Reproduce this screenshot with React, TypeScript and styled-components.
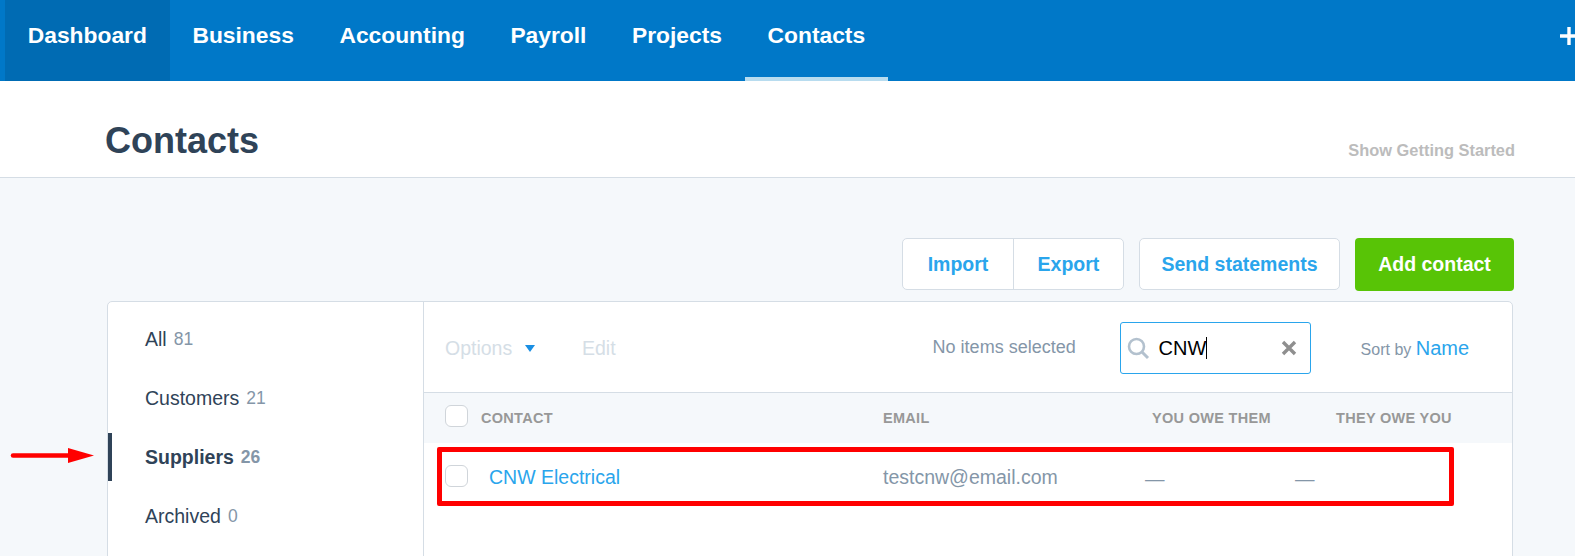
import React from 'react';
import styled, { createGlobalStyle } from 'styled-components';

const GlobalStyle = createGlobalStyle`
  html, body {
    margin: 0;
    padding: 0;
    background: #f5f8fb;
    overflow: hidden;
  }
  * {
    box-sizing: border-box;
  }
`;

const Page = styled.div`
  position: relative;
  width: 1575px;
  height: 556px;
  overflow: hidden;
  font-family: 'Liberation Sans', Arial, sans-serif;
  background: #f5f8fb;
`;

const Nav = styled.nav`
  display: flex;
  height: 81px;
  padding-left: 5px;
  background: #0078c8;
`;

const NavItem = styled.div<{ $home?: boolean; $current?: boolean }>`
  display: flex;
  align-items: flex-start;
  padding: 20px 22.8px 0;
  color: #fff;
  font-size: 22.8px;
  font-weight: 700;
  line-height: 30px;
  background: ${(p) => (p.$home ? '#006bb3' : 'transparent')};
  border-bottom: 4px solid ${(p) => (p.$current ? '#b8dcef' : 'transparent')};
`;

const NavPlus = styled.svg`
  flex: none;
  margin: 27px -4px 0 auto;
`;

const Header = styled.header`
  display: flex;
  justify-content: space-between;
  height: 97px;
  padding: 39px 60px 0 105px;
  background: #fff;
  border-bottom: 1px solid #d5dde5;
`;

const Title = styled.h1`
  margin: 0;
  color: #2f4358;
  font-size: 36px;
  font-weight: 700;
  line-height: 42px;
`;

const GettingStarted = styled.a`
  margin-top: 20px;
  color: #bcbcbc;
  font-size: 16.4px;
  font-weight: 700;
  line-height: 20px;
`;

const Actions = styled.div`
  display: flex;
  justify-content: flex-end;
  gap: 15px;
  height: 53px;
  margin: 60px 61px 10px 0;
`;

const ButtonGroup = styled.div`
  display: flex;
  height: 52px;
  background: #fff;
  border: 1px solid #d5dde5;
  border-radius: 5px;
`;

const OutlineButton = styled.button<{ $width: number; $divided?: boolean }>`
  width: ${(p) => p.$width}px;
  padding: 0;
  color: #2aa5ec;
  font: 700 19.5px 'Liberation Sans', Arial, sans-serif;
  background: none;
  border: 0;
  border-left: ${(p) => (p.$divided ? '1px solid #d5dde5' : '0')};
`;

const AddButton = styled.button`
  width: 159px;
  height: 53px;
  padding: 0;
  color: #fff;
  font: 700 19.5px 'Liberation Sans', Arial, sans-serif;
  background: #58c406;
  border: 0;
  border-radius: 4px;
`;

const Panel = styled.section`
  display: flex;
  width: 1406px;
  height: 300px;
  margin-left: 107px;
  background: #fff;
  border: 1px solid #d5dde5;
  border-radius: 5px;
`;

const Sidebar = styled.ul`
  flex: none;
  width: 316px;
  margin: 0;
  padding: 8px 0 0;
  list-style: none;
  border-right: 1px solid #d5dde5;
`;

const SideItem = styled.li<{ $active?: boolean }>`
  position: relative;
  display: flex;
  align-items: center;
  gap: 7px;
  height: 59px;
  padding-left: 37px;
  color: #2f4358;
  font-size: 19.5px;
  font-weight: ${(p) => (p.$active ? 700 : 400)};

  &::before {
    content: '';
    display: ${(p) => (p.$active ? 'block' : 'none')};
    position: absolute;
    left: 0;
    top: 5px;
    width: 4px;
    height: 48px;
    background: #2f4358;
  }
`;

const Count = styled.span`
  color: #8496a8;
  font-size: 17.5px;
`;

const Main = styled.div`
  flex: 1;
  min-width: 0;
`;

const Toolbar = styled.div`
  display: flex;
  align-items: center;
  height: 91px;
  padding-top: 2px;
  border-bottom: 1px solid #d5dde5;
`;

const MutedAction = styled.span<{ $gap: number }>`
  margin-right: ${(p) => p.$gap}px;
  color: #d5dee6;
  font-size: 19.5px;
`;

const OptionsWrap = styled.div`
  display: flex;
  align-items: center;
  width: 158px;
  padding-left: 21px;
`;

const Caret = styled.span`
  width: 0;
  height: 0;
  border: 5px solid transparent;
  border-top: 7px solid #1a8fe3;
  border-bottom: 0;
`;

const Selected = styled.span`
  width: 187px;
  margin: 0 0 1px 317px;
  color: #8496a8;
  font-size: 18px;
`;

const Search = styled.div`
  display: flex;
  align-items: center;
  width: 191px;
  height: 52px;
  padding: 0 13px 0 5px;
  background: #fff;
  border: 1px solid #2aa5ec;
  border-radius: 3px;
`;

const SearchText = styled.span`
  flex: 1;
  margin-left: 8px;
  color: #000;
  font-size: 20px;
`;

const TextCaret = styled.span`
  display: inline-block;
  width: 1px;
  height: 22px;
  margin-bottom: -4px;
  background: #000;
`;

const SortBy = styled.span`
  margin-left: 50px;
  color: #8496a8;
  font-size: 16px;
`;

const SortName = styled.span`
  color: #2aa5ec;
  font-size: 20px;
`;

const HeadRow = styled.div`
  display: flex;
  align-items: center;
  height: 50px;
  padding-left: 21px;
  background: #f5f8fb;
`;

const BodyRow = styled.div`
  display: flex;
  align-items: center;
  height: 68px;
  padding-left: 21px;
`;

const Check = styled.span<{ $lift: number }>`
  flex: none;
  width: 23px;
  height: 22px;
  margin-bottom: ${(p) => p.$lift}px;
  background: #fff;
  border: 1px solid #d0d5da;
  border-radius: 6px;
`;

const HeadCell = styled.div<{ $width: number; $offset?: number }>`
  flex: none;
  width: ${(p) => p.$width}px;
  margin-left: ${(p) => p.$offset ?? 0}px;
  color: #989898;
  font-size: 14.5px;
  font-weight: 700;
  letter-spacing: 0.3px;
`;

const Cell = styled.div<{ $width: number; $offset?: number }>`
  flex: none;
  width: ${(p) => p.$width}px;
  margin-left: ${(p) => p.$offset ?? 0}px;
  color: #8496a8;
  font-size: 19.5px;
`;

const ContactLink = styled(Cell)`
  color: #2aa5ec;
`;

const DashCell = styled(Cell)`
  padding-top: 4px;
`;

const Highlight = styled.div`
  position: absolute;
  left: 437px;
  top: 447px;
  width: 1017px;
  height: 59px;
  border: 5px solid #f00;
  border-radius: 2px;
  pointer-events: none;
`;

const Arrow = styled.svg`
  position: absolute;
  left: 10px;
  top: 447px;
`;

export default function App() {
  return (
    <Page>
      <GlobalStyle />
      <Nav>
        <NavItem $home>Dashboard</NavItem>
        <NavItem>Business</NavItem>
        <NavItem>Accounting</NavItem>
        <NavItem>Payroll</NavItem>
        <NavItem>Projects</NavItem>
        <NavItem $current>Contacts</NavItem>
        <NavPlus width="20" height="18" viewBox="0 0 20 18">
          <path d="M10 0v18M1 9h18" stroke="#fff" strokeWidth="3.4" fill="none" />
        </NavPlus>
      </Nav>

      <Header>
        <Title>Contacts</Title>
        <GettingStarted>Show Getting Started</GettingStarted>
      </Header>

      <Actions>
        <ButtonGroup>
          <OutlineButton $width={110}>Import</OutlineButton>
          <OutlineButton $width={110} $divided>Export</OutlineButton>
        </ButtonGroup>
        <ButtonGroup>
          <OutlineButton $width={199}>Send statements</OutlineButton>
        </ButtonGroup>
        <AddButton>Add contact</AddButton>
      </Actions>

      <Panel>
        <Sidebar>
          <SideItem>All <Count>81</Count></SideItem>
          <SideItem>Customers <Count>21</Count></SideItem>
          <SideItem $active>Suppliers <Count>26</Count></SideItem>
          <SideItem>Archived <Count>0</Count></SideItem>
        </Sidebar>
        <Main>
          <Toolbar>
            <OptionsWrap>
              <MutedAction $gap={13}>Options</MutedAction>
              <Caret />
            </OptionsWrap>
            <MutedAction $gap={0}>Edit</MutedAction>
            <Selected>No items selected</Selected>
            <Search>
              <svg width="25" height="25" viewBox="0 0 25 25">
                <circle cx="10.5" cy="10.5" r="7.5" fill="none" stroke="#b3c1ce" strokeWidth="2.6" />
                <path d="M16 16l6 6" stroke="#b3c1ce" strokeWidth="3" />
              </svg>
              <SearchText>CNW<TextCaret /></SearchText>
              <svg width="16" height="16" viewBox="0 0 16 16">
                <path d="M2 2l12 12M14 2L2 14" stroke="#8f8f8f" strokeWidth="3.4" />
              </svg>
            </Search>
            <SortBy>Sort by <SortName>Name</SortName></SortBy>
          </Toolbar>
          <HeadRow>
            <Check $lift={5} />
            <HeadCell $width={402} $offset={13}>CONTACT</HeadCell>
            <HeadCell $width={269}>EMAIL</HeadCell>
            <HeadCell $width={184}>YOU OWE THEM</HeadCell>
            <HeadCell $width={130}>THEY OWE YOU</HeadCell>
          </HeadRow>
          <BodyRow>
            <Check $lift={2} />
            <ContactLink $width={394} $offset={21}>CNW Electrical</ContactLink>
            <Cell $width={262}>testcnw@email.com</Cell>
            <DashCell $width={150}>—</DashCell>
            <DashCell $width={100}>—</DashCell>
          </BodyRow>
        </Main>
      </Panel>

      <Highlight />
      <Arrow width="86" height="16" viewBox="0 0 86 16">
        <path d="M3 8.5h58" stroke="#f00" strokeWidth="4.5" strokeLinecap="round" />
        <path d="M58 1l26 7.5-26 7.5z" fill="#f00" />
      </Arrow>
    </Page>
  );
}
